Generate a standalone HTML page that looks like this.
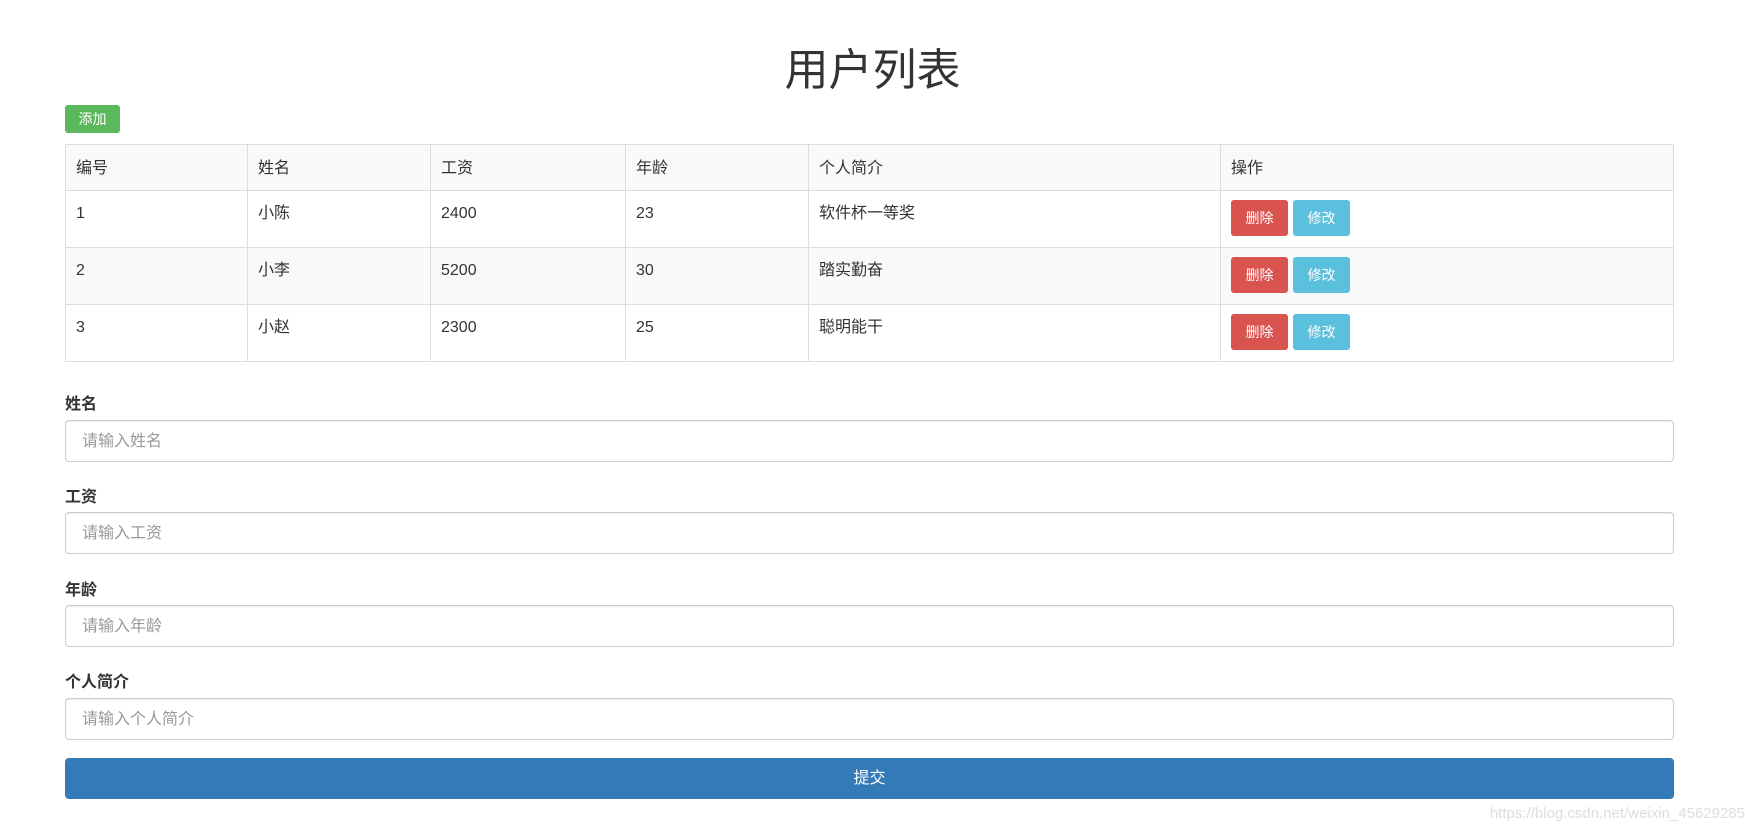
<!DOCTYPE html>
<html><head><meta charset="utf-8"><style>
body{margin:0;background:#fff;font-family:"Liberation Sans","Noto Sans CJK SC",sans-serif;color:#333;font-size:16px;width:1745px;height:831px;position:relative;overflow:hidden}
h1{position:absolute;top:42px;left:0;width:1745px;text-align:center;margin:0;font-size:44px;font-weight:400;line-height:58px}
.add{position:absolute;left:65px;top:105px;width:55px;height:28px;background:#5cb85c;color:#fff;border-radius:3px;font-size:14px;line-height:28px;text-align:center}
table{position:absolute;left:65px;top:144px;width:1609px;border-collapse:collapse}
td,th{border:1px solid #ddd;padding:0 10px;text-align:left;font-weight:400;vertical-align:top;line-height:22px}
th{height:43px;vertical-align:middle;background:#f9f9f9;padding-top:2px}
td{height:57px;padding-top:12px;box-sizing:border-box}
tr.alt td{background:#f9f9f9}
.b{display:inline-block;width:57px;height:36px;line-height:36px;color:#fff;text-align:center;border-radius:3px;font-size:14px;margin-top:-3px}
.r{background:#d9534f}.i{background:#5bc0de;margin-left:5px}
label{position:absolute;left:65px;font-weight:bold;font-size:16px}
.in{position:absolute;left:65px;width:1607px;height:40px;border:1px solid #ccc;border-radius:4px;color:#999;font-size:16px;line-height:41px;text-indent:16px;box-shadow:inset 0 1px 1px rgba(0,0,0,.075)}
.sub{position:absolute;left:65px;top:758px;width:1609px;height:41px;background:#337ab7;border-radius:4px;color:#fff;text-align:center;line-height:41px;font-size:16px}
.wm{position:absolute;right:0;top:805px;color:#ddd;font-size:15px}
</style></head><body>
<h1>用户列表</h1>
<div class="add">添加</div>
<table>
<colgroup><col style="width:182px"><col style="width:183px"><col style="width:195px"><col style="width:183px"><col style="width:412px"><col></colgroup>
<tr><th>编号</th><th>姓名</th><th>工资</th><th>年龄</th><th>个人简介</th><th>操作</th></tr>
<tr><td>1</td><td>小陈</td><td>2400</td><td>23</td><td>软件杯一等奖</td><td><span class="b r">删除</span><span class="b i">修改</span></td></tr>
<tr class="alt"><td>2</td><td>小李</td><td>5200</td><td>30</td><td>踏实勤奋</td><td><span class="b r">删除</span><span class="b i">修改</span></td></tr>
<tr><td>3</td><td>小赵</td><td>2300</td><td>25</td><td>聪明能干</td><td><span class="b r">删除</span><span class="b i">修改</span></td></tr>
</table>
<label style="top:390px">姓名</label><div class="in" style="top:420px">请输入姓名</div>
<label style="top:483px">工资</label><div class="in" style="top:512px">请输入工资</div>
<label style="top:576px">年龄</label><div class="in" style="top:605px">请输入年龄</div>
<label style="top:668px">个人简介</label><div class="in" style="top:698px">请输入个人简介</div>
<div class="sub">提交</div>
<div class="wm">https://blog.csdn.net/weixin_45629285</div>
</body></html>
